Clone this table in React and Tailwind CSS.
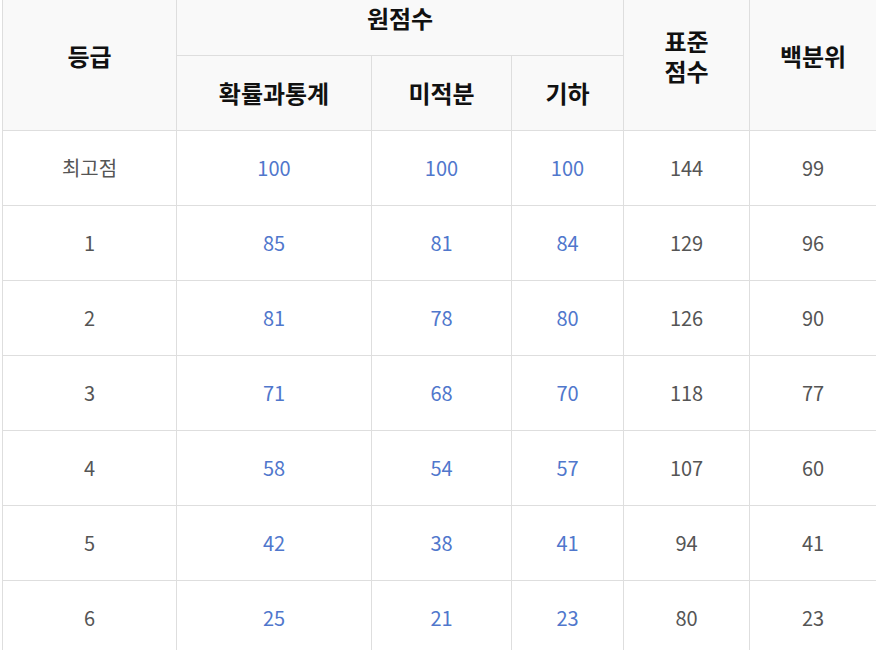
import React from "react";

const rows = [
  ["최고점", "100", "100", "100", "144", "99"],
  ["1", "85", "81", "84", "129", "96"],
  ["2", "81", "78", "80", "126", "90"],
  ["3", "71", "68", "70", "118", "77"],
  ["4", "58", "54", "57", "107", "60"],
  ["5", "42", "38", "41", "94", "41"],
  ["6", "25", "21", "23", "80", "23"],
];

const th =
  "border border-[#dedede] bg-[#f9f9f9] text-[24px] font-bold text-[#111] text-center align-middle";

export default function App() {
  return (
    <div
      className="w-[876px] h-[650px] overflow-hidden bg-white pl-[2px]"
      style={{ fontFamily: '"Noto Sans CJK KR", "Noto Sans", sans-serif' }}
    >
      <table className="border-collapse table-fixed w-[874px] -mt-[20px]">
        <colgroup>
          <col className="w-[174px]" />
          <col className="w-[195px]" />
          <col className="w-[140px]" />
          <col className="w-[112px]" />
          <col className="w-[126px]" />
          <col className="w-[127px]" />
        </colgroup>
        <thead>
          <tr className="h-[75px]">
            <th rowSpan={2} className={th}>
              등급
            </th>
            <th colSpan={3} className={th}>
              원점수
            </th>
            <th rowSpan={2} className={th + " leading-[30px]"}>
              표준
              <br />
              점수
            </th>
            <th rowSpan={2} className={th}>
              백분위
            </th>
          </tr>
          <tr className="h-[75px]">
            <th className={th}>확률과통계</th>
            <th className={th}>미적분</th>
            <th className={th}>기하</th>
          </tr>
        </thead>
        <tbody>
          {rows.map((r, i) => (
            <tr key={i} className="h-[75px]">
              {r.map((c, j) => (
                <td
                  key={j}
                  className={
                    j >= 1 && j <= 3
                      ? "border border-[#dedede] text-center align-middle text-[20px] text-[#5077cc]"
                      : "border border-[#dedede] text-center align-middle text-[20px] text-[#555]"
                  }
                >
                  {c}
                </td>
              ))}
            </tr>
          ))}
        </tbody>
      </table>
    </div>
  );
}
